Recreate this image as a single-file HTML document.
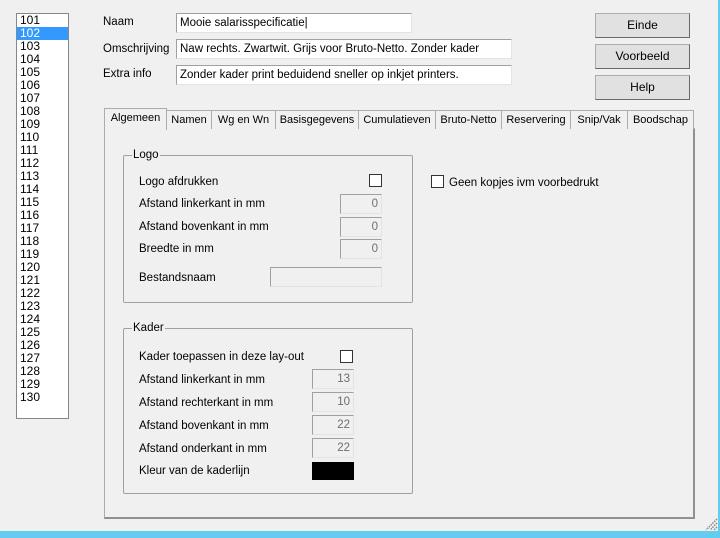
<!DOCTYPE html>
<html><head><meta charset="utf-8"><style>
*{box-sizing:border-box;margin:0;padding:0}
body{width:720px;height:538px;background:#f0f0f0;font-family:"Liberation Sans",Arial,sans-serif;font-size:11.5px;line-height:16px;color:#000;position:relative;overflow:hidden}
.a{position:absolute}
.lb{left:16px;top:13px;width:53px;height:406px;background:#fff;border:1px solid #828790}
.lb div{height:13px;line-height:13px;padding-left:3px;font-size:12px}
.lb .s{background:#3399ff;color:#fff}
.in{background:#fff;border:1px solid #a0a0a0;border-right-color:#e3e3e3;border-bottom-color:#e3e3e3;height:20px;line-height:18px;padding-left:3px;white-space:nowrap;overflow:hidden}
.btn{width:95px;height:25px;background:#e1e1e1;border:1px solid #adadad;border-right-color:#696969;border-bottom-color:#696969;text-align:center;line-height:22px;font-size:12px}
.tab{top:110px;height:19px;border:1px solid #adadad;border-bottom:none;background:#f0f0f0;text-align:center;line-height:18px;font-size:11px;white-space:nowrap;overflow:hidden}
.panel{left:104px;top:128px;width:591px;height:391px;border:1px solid #fff;border-right:2px solid #8f8f96;border-bottom:2px solid #8f8f96;border-left-color:#adadad;border-top-color:#fff}
.grp{border:1px solid #a0a0a0;border-radius:2px}
.lg{background:#f0f0f0;padding:0 1px}
.f{height:20px;border:1px solid #a0a0a0;border-right-color:#e3e3e3;border-bottom-color:#e3e3e3;background:#f0f0f0;color:#6d6d6d;text-align:right;padding-right:3px;line-height:18px}
.cb{width:13px;height:13px;border:1px solid #333;background:#fff}
</style></head><body>
<div class="a lb">
<div>101</div><div class="s">102</div><div>103</div><div>104</div><div>105</div><div>106</div><div>107</div><div>108</div><div>109</div><div>110</div><div>111</div><div>112</div><div>113</div><div>114</div><div>115</div><div>116</div><div>117</div><div>118</div><div>119</div><div>120</div><div>121</div><div>122</div><div>123</div><div>124</div><div>125</div><div>126</div><div>127</div><div>128</div><div>129</div><div>130</div>
</div>
<div class="a" style="left:103px;top:14px">Naam</div>
<div class="a" style="left:103px;top:41px">Omschrijving</div>
<div class="a" style="left:103px;top:66px">Extra info</div>
<div class="a in" style="left:176px;top:13px;width:236px">Mooie salarisspecificatie|</div>
<div class="a in" style="left:176px;top:39px;width:336px">Naw rechts. Zwartwit. Grijs voor Bruto-Netto. Zonder kader</div>
<div class="a in" style="left:176px;top:65px;width:336px">Zonder kader print beduidend sneller op inkjet printers.</div>
<div class="a btn" style="left:595px;top:13px">Einde</div>
<div class="a btn" style="left:595px;top:44px">Voorbeeld</div>
<div class="a btn" style="left:595px;top:75px">Help</div>
<div class="a panel"></div>
<div class="a tab" style="left:166px;width:46px">Namen</div>
<div class="a tab" style="left:211px;width:65px">Wg en Wn</div>
<div class="a tab" style="left:275px;width:84px">Basisgegevens</div>
<div class="a tab" style="left:358px;width:78px">Cumulatieven</div>
<div class="a tab" style="left:435px;width:67px">Bruto-Netto</div>
<div class="a tab" style="left:501px;width:70px">Reservering</div>
<div class="a tab" style="left:570px;width:58px">Snip/Vak</div>
<div class="a tab" style="left:627px;width:67px">Boodschap</div>
<div class="a tab" style="left:104px;top:108px;width:63px;height:22px;border-color:#adadad;line-height:19px;background:#f0f0f0;z-index:2">Algemeen</div>
<div class="a grp" style="left:123px;top:155px;width:290px;height:148px"></div>
<div class="a lg" style="left:132px;top:147px">Logo</div>
<div class="a" style="left:139px;top:174px">Logo afdrukken</div>
<div class="a cb" style="left:369px;top:174px"></div>
<div class="a" style="left:139px;top:196px">Afstand linkerkant in mm</div>
<div class="a f" style="left:340px;top:194px;width:42px">0</div>
<div class="a" style="left:139px;top:219px">Afstand bovenkant in mm</div>
<div class="a f" style="left:340px;top:217px;width:42px">0</div>
<div class="a" style="left:139px;top:241px">Breedte in mm</div>
<div class="a f" style="left:340px;top:239px;width:42px">0</div>
<div class="a" style="left:139px;top:270px">Bestandsnaam</div>
<div class="a f" style="left:270px;top:267px;width:112px"></div>
<div class="a cb" style="left:431px;top:175px;border-color:#333"></div>
<div class="a" style="left:449px;top:175px">Geen kopjes ivm voorbedrukt</div>
<div class="a grp" style="left:123px;top:328px;width:290px;height:166px"></div>
<div class="a lg" style="left:132px;top:320px">Kader</div>
<div class="a" style="left:139px;top:349px">Kader toepassen in deze lay-out</div>
<div class="a cb" style="left:340px;top:350px"></div>
<div class="a" style="left:139px;top:372px">Afstand linkerkant in mm</div>
<div class="a f" style="left:312px;top:369px;width:42px">13</div>
<div class="a" style="left:139px;top:395px">Afstand rechterkant in mm</div>
<div class="a f" style="left:312px;top:392px;width:42px">10</div>
<div class="a" style="left:139px;top:418px">Afstand bovenkant in mm</div>
<div class="a f" style="left:312px;top:415px;width:42px">22</div>
<div class="a" style="left:139px;top:441px">Afstand onderkant in mm</div>
<div class="a f" style="left:312px;top:438px;width:42px">22</div>
<div class="a" style="left:139px;top:463px">Kleur van de kaderlijn</div>
<div class="a" style="left:312px;top:462px;width:42px;height:18px;background:#000"></div>
<svg class="a" style="left:704px;top:517px" width="14" height="14"><path d="M13 2L2 13M13 6L6 13M13 10L10 13" stroke="#888" stroke-width="1.5" stroke-dasharray="1.5 1"/></svg>
<div class="a" style="left:718px;top:0;width:2px;height:538px;background:#62cdef"></div>
<div class="a" style="left:0;top:531px;width:720px;height:7px;background:#62cdef"></div>
</body></html>
